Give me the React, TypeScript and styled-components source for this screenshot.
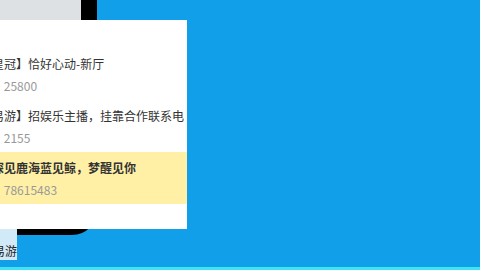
import React from "react";
import styled, { createGlobalStyle } from "styled-components";

const blue = `#129fe9`;
const font = `"Noto Sans CJK SC", "Noto Sans", sans-serif`;

const GlobalStyle = createGlobalStyle`
  html, body {
    margin: 0;
    padding: 0;
    background: ${blue};
    overflow: hidden;
  }
`;

const Page = styled.div`
  position: relative;
  width: 480px;
  height: 270px;
  box-sizing: border-box;
  overflow: hidden;
  background: ${blue};
  border-bottom: 3px solid #3fe3f3;
  font-family: ${font};
`;

const PhoneColumn = styled.div`
  display: flex;
  flex-direction: column;
  align-items: flex-start;
  margin-left: -120px;
  margin-top: -200px;
`;

const Phone = styled.div`
  width: 217px;
  height: 435px;
  box-sizing: border-box;
  border: 16px solid #000;
  border-radius: 25px;
  background: #dde1e4;
`;

const Caption = styled.div`
  margin-top: -6px;
  margin-left: 113px;
  padding: 13px 0 1px;
  background: #d2e9f8;
  color: #222;
  font-size: 12px;
  line-height: 17px;
`;

const Dropdown = styled.div`
  position: absolute;
  left: -40px;
  top: 20px;
  width: 227px;
  height: 209px;
  box-sizing: border-box;
  padding-top: 28px;
  background: #fff;
`;

const Row = styled.div<{ active?: boolean }>`
  padding: 7px 0 6px 20px;
  background: ${({ active }) => (active ? "#fff0a6" : "transparent")};
`;

const Title = styled.div<{ active?: boolean }>`
  height: 17px;
  overflow: hidden;
  font-size: 12px;
  line-height: 17px;
  color: #333;
  font-weight: ${({ active }) => (active ? 700 : 400)};
`;

const Sub = styled.div`
  margin-top: 5px;
  font-size: 12px;
  line-height: 17px;
  color: #999;
  white-space: nowrap;
`;

const rooms = [
  { title: "【皇冠】恰好心动-新厅", id: "ID：25800" },
  { title: "【易游】招娱乐主播，挂靠合作联系电话", id: "ID：2155" },
  { title: "林深见鹿海蓝见鲸，梦醒见你", id: "ID：78615483", active: true },
];

export default function App() {
  return (
    <Page>
      <GlobalStyle />
      <PhoneColumn>
        <Phone />
        <Caption>易游</Caption>
      </PhoneColumn>
      <Dropdown>
        {rooms.map((r) => (
          <Row key={r.id} active={r.active}>
            <Title active={r.active}>{r.title}</Title>
            <Sub>{r.id}</Sub>
          </Row>
        ))}
      </Dropdown>
    </Page>
  );
}
